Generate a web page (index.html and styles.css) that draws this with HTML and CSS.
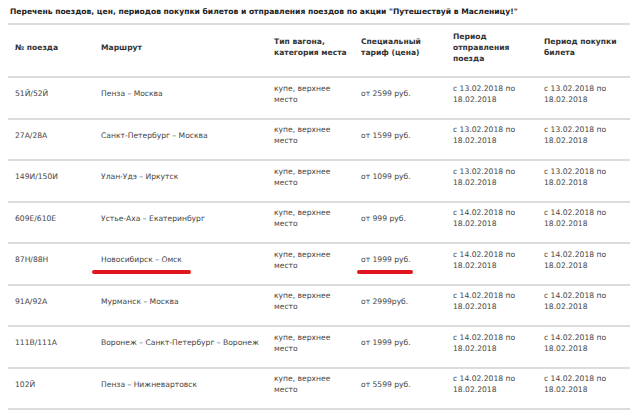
FILE: index.html
```html
<!DOCTYPE html>
<html lang="ru">
<head>
<meta charset="utf-8">
<title>Путешествуй в Масленицу</title>
<link rel="stylesheet" href="styles.css">
</head>
<body>
<div class="page">
  <div class="title">Перечень поездов, цен, периодов покупки билетов и отправления поездов по акции "Путешествуй в Масленицу!"</div>
  <table class="trains">
    <colgroup>
      <col class="c1"><col class="c2"><col class="c3"><col class="c4"><col class="c5"><col class="c6">
    </colgroup>
    <thead>
      <tr>
        <th>№ поезда</th>
        <th>Маршрут</th>
        <th>Тип вагона, категория места</th>
        <th>Специальный тариф (цена)</th>
        <th>Период отправления поезда</th>
        <th>Период покупки билета</th>
      </tr>
    </thead>
    <tbody>
      <tr>
        <td>51Й/52Й</td><td>Пенза – Москва</td><td>купе, верхнее место</td><td>от 2599 руб.</td>
        <td>с 13.02.2018 по 18.02.2018</td><td>с 13.02.2018 по 18.02.2018</td>
      </tr>
      <tr>
        <td>27А/28А</td><td>Санкт-Петербург – Москва</td><td>купе, верхнее место</td><td>от 1599 руб.</td>
        <td>с 13.02.2018 по 18.02.2018</td><td>с 13.02.2018 по 18.02.2018</td>
      </tr>
      <tr>
        <td>149И/150И</td><td>Улан-Удэ – Иркутск</td><td>купе, верхнее место</td><td>от 1099 руб.</td>
        <td>с 13.02.2018 по 18.02.2018</td><td>с 13.02.2018 по 18.02.2018</td>
      </tr>
      <tr>
        <td>609Е/610Е</td><td>Устье-Аха – Екатеринбург</td><td>купе, верхнее место</td><td>от 999 руб.</td>
        <td>с 14.02.2018 по 18.02.2018</td><td>с 14.02.2018 по 18.02.2018</td>
      </tr>
      <tr>
        <td>87Н/88Н</td><td><span class="mark mark-route">Новосибирск – Омск</span></td><td>купе, верхнее место</td><td><span class="mark mark-price">от 1999 руб.</span></td>
        <td>с 14.02.2018 по 18.02.2018</td><td>с 14.02.2018 по 18.02.2018</td>
      </tr>
      <tr>
        <td>91А/92А</td><td>Мурманск – Москва</td><td>купе, верхнее место</td><td>от 2999руб.</td>
        <td>с 14.02.2018 по 18.02.2018</td><td>с 14.02.2018 по 18.02.2018</td>
      </tr>
      <tr>
        <td>111В/111А</td><td class="nowrap">Воронеж – Санкт-Петербург – Воронеж</td><td>купе, верхнее место</td><td>от 1999 руб.</td>
        <td>с 14.02.2018 по 18.02.2018</td><td>с 14.02.2018 по 18.02.2018</td>
      </tr>
      <tr>
        <td>102Й</td><td>Пенза – Нижневартовск</td><td>купе, верхнее место</td><td>от 5599 руб.</td>
        <td>с 14.02.2018 по 18.02.2018</td><td>с 14.02.2018 по 18.02.2018</td>
      </tr>
    </tbody>
  </table>
</div>
</body>
</html>
```

FILE: styles.css
```css
html, body {
  margin: 0;
  padding: 0;
  background: #ffffff;
}

.page {
  padding: 0 10px 0 8px;
  font-family: "DejaVu Sans", Verdana, sans-serif;
  font-size: 7.6px;
  line-height: 11px;
  color: #444444;
}

.title {
  padding: 5.5px 2px 6.5px;
  font-weight: bold;
  color: #222222;
  border-bottom: 2px solid #dcdcdc;
  white-space: nowrap;
}

.trains {
  width: 622px;
  border-collapse: collapse;
  table-layout: fixed;
}

.c1 { width: 86px; }
.c2 { width: 173px; }
.c3 { width: 87px; }
.c4 { width: 92px; }
.c5 { width: 91px; }
.c6 { width: 93px; }

.trains th {
  text-align: left;
  vertical-align: middle;
  font-weight: bold;
  color: #333333;
  height: 33px;
  padding: 5.5px 4px 12.5px 7px;
  border-bottom: 2px solid #dcdcdc;
}

.trains td {
  vertical-align: middle;
  height: 22px;
  padding: 4.5px 4px 13px 7px;
  border-bottom: 2px solid #dcdcdc;
}

.nowrap {
  white-space: nowrap;
}

.mark {
  position: relative;
  display: inline-block;
}

.mark::after {
  content: "";
  position: absolute;
  top: calc(100% + 4.5px);
  height: 4px;
  border-radius: 2px;
  background: #e2161f;
}

.mark-route::after {
  left: -9px;
  right: -9px;
}

.mark-price::after {
  left: -4px;
  right: -2px;
}
```
